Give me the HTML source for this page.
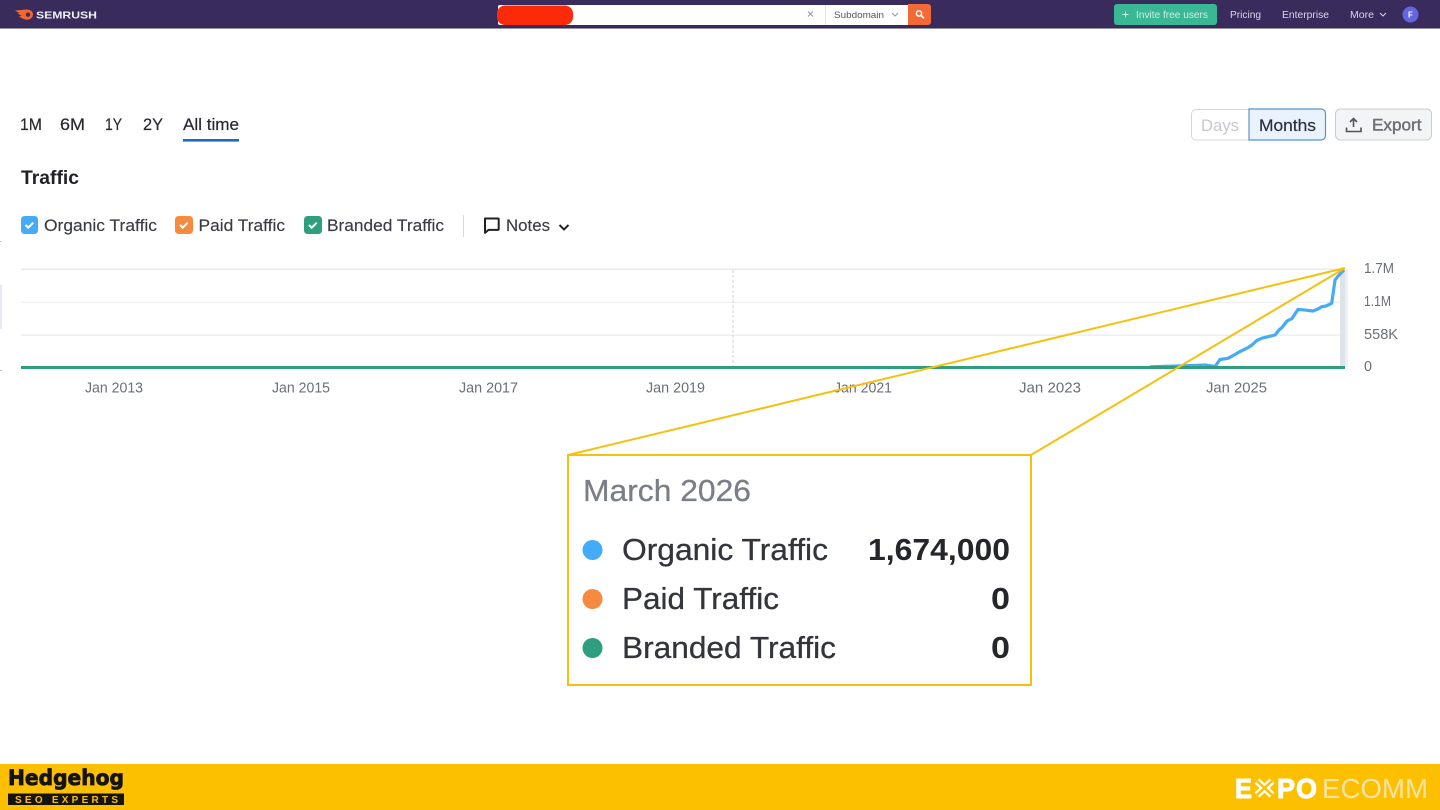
<!DOCTYPE html>
<html lang="en">
<head>
<meta charset="utf-8">
<title>Traffic</title>
<style>
html,body{margin:0;padding:0;background:#fff;width:1440px;height:810px;overflow:hidden}
svg{display:block;position:absolute;left:0;top:0;filter:blur(.35px)}
text{font-family:"Liberation Sans",sans-serif;white-space:pre}
.m{stroke:currentColor;stroke-width:.25}
</style>
</head>
<body>
<svg width="1440" height="810" viewBox="0 0 1440 810" xmlns="http://www.w3.org/2000/svg">
<rect width="1440" height="810" fill="#fff"/>

<!-- Header -->
<rect width="1440" height="28" fill="#392c5c"/>
<rect y="27.5" width="1440" height="1" fill="#2e2a40"/>
<path d="M15 10.500 L24 9.700 Q29 9 31.500 11 Q34.500 14.500 31.500 18 Q28.500 20.500 24.500 19.300 Q21 18.300 19 16 L22 15.800 Q19 14.700 17.500 13.300 L20 13 Q17 12.200 15 10.500Z" fill="#f2682f"/>
<circle cx="28" cy="14.700" r="2.200" fill="#392c5c"/>
<text x="36" y="18.300" font-size="10.500" font-weight="700" fill="#f2f0f7" textLength="61" lengthAdjust="spacingAndGlyphs">SEMRUSH</text>

<rect x="498" y="5" width="412" height="20" rx="2" fill="#fff"/>
<rect x="497" y="5.500" width="76" height="19.500" rx="8" fill="#fb2a0a"/>
<path d="M808 11.500l5 5m0-5l-5 5" stroke="#9a9ca3" stroke-width="1.100" fill="none"/>
<rect x="825" y="5" width="1" height="20" fill="#e6e7ea"/>
<text x="834" y="18" font-size="9.500" fill="#55565f" textLength="50" lengthAdjust="spacingAndGlyphs">Subdomain</text>
<path d="M892 13l3 3 3-3" stroke="#9a9ca3" stroke-width="1" fill="none"/>
<path d="M908 4h20a3 3 0 0 1 3 3v15a3 3 0 0 1-3 3h-20z" fill="#f26b37"/>
<circle cx="919" cy="13.500" r="2.600" fill="none" stroke="#fff" stroke-width="1.500"/>
<path d="M921 15.500l3 2.800" stroke="#fff" stroke-width="1.700"/>

<rect x="1114" y="4" width="103" height="21" rx="3" fill="#3ab795"/>
<path d="M1125.500 11.500v6m-3-3h6" stroke="#cdeee3" stroke-width="1" fill="none"/>
<text x="1136" y="18" font-size="10" fill="#cdeee3" textLength="72" lengthAdjust="spacingAndGlyphs">Invite free users</text>
<text x="1230" y="18" font-size="10" fill="#d9d6e4" textLength="31" lengthAdjust="spacingAndGlyphs">Pricing</text>
<text x="1282" y="18" font-size="10" fill="#d9d6e4" textLength="47" lengthAdjust="spacingAndGlyphs">Enterprise</text>
<text x="1350" y="18" font-size="10" fill="#d9d6e4" textLength="24" lengthAdjust="spacingAndGlyphs">More</text>
<path d="M1380 13l3 3 3-3" stroke="#d9d6e4" stroke-width="1" fill="none"/>
<circle cx="1410.500" cy="14.500" r="8" fill="#6366e0"/>
<text x="1410.500" y="17.500" font-size="8" font-weight="700" fill="#fff" text-anchor="middle">F</text>

<!-- Tabs -->
<g font-size="17" fill="#27292f" stroke="#27292f" stroke-width=".2">
<text x="20" y="130" textLength="22" lengthAdjust="spacingAndGlyphs">1M</text>
<text x="60" y="130" textLength="25" lengthAdjust="spacingAndGlyphs">6M</text>
<text x="105" y="130" textLength="17" lengthAdjust="spacingAndGlyphs">1Y</text>
<text x="143" y="130" textLength="20" lengthAdjust="spacingAndGlyphs">2Y</text>
<text x="183" y="130" textLength="56" lengthAdjust="spacingAndGlyphs">All time</text>
</g>
<rect x="183" y="139" width="56" height="2.600" fill="#1f69c3"/>

<text x="21" y="184" font-size="19.500" font-weight="700" fill="#1f2126" textLength="58" lengthAdjust="spacingAndGlyphs">Traffic</text>

<!-- Legend -->
<rect x="21" y="216" width="17" height="18" rx="3.500" fill="#44abf8"/>
<path d="M25.500 225l2.700 2.700 5-5" stroke="#fff" stroke-width="2" fill="none"/>
<text x="44" y="231" font-size="17" fill="#3a3c43" stroke="#3a3c43" stroke-width=".15" textLength="113" lengthAdjust="spacingAndGlyphs">Organic Traffic</text>
<rect x="175" y="216" width="18" height="18" rx="3.500" fill="#f68b3f"/>
<path d="M180 225l2.700 2.700 5-5" stroke="#fff" stroke-width="2" fill="none"/>
<text x="198.500" y="231" font-size="17" fill="#3a3c43" stroke="#3a3c43" stroke-width=".15" textLength="86.500" lengthAdjust="spacingAndGlyphs">Paid Traffic</text>
<rect x="304" y="216" width="18" height="18" rx="3.500" fill="#2f9e7f"/>
<path d="M309 225l2.700 2.700 5-5" stroke="#fff" stroke-width="2" fill="none"/>
<text x="327" y="231" font-size="17" fill="#3a3c43" stroke="#3a3c43" stroke-width=".15" textLength="117" lengthAdjust="spacingAndGlyphs">Branded Traffic</text>
<rect x="463" y="215" width="1" height="22" fill="#d6d8db"/>
<path d="M485 218.500h13a.7.7 0 0 1 .7.700v10a.7.7 0 0 1-.7.700h-9.500l-3.500 3z" fill="none" stroke="#1f2126" stroke-width="2" stroke-linejoin="round"/>
<text x="506" y="231" font-size="17" fill="#3a3c43" stroke="#3a3c43" stroke-width=".15" textLength="44" lengthAdjust="spacingAndGlyphs">Notes</text>
<path d="M559.500 225l4.500 4.500 4.500-4.500" stroke="#24262c" stroke-width="2" fill="none"/>

<!-- Buttons -->
<path d="M1249 109.500h-53a4.500 4.500 0 0 0-4.500 4.500v21.500a4.500 4.500 0 0 0 4.500 4.500h53z" fill="#fff" stroke="#d4d7da"/>
<text x="1201" y="131" font-size="17" fill="#c5c8cc" textLength="38" lengthAdjust="spacingAndGlyphs">Days</text>
<path d="M1249 109h72a4.500 4.500 0 0 1 4.500 4.500v22a4.500 4.500 0 0 1-4.500 4.500h-72z" fill="#e8f3fd" stroke="#5a92d0" stroke-width="1.200"/>
<text x="1259" y="131" font-size="17" fill="#2a2f3a" stroke="#2a2f3a" stroke-width=".2" textLength="57" lengthAdjust="spacingAndGlyphs">Months</text>
<rect x="1335.500" y="109" width="96" height="31" rx="5" fill="#f3f4f5" stroke="#c8ccd0"/>
<path d="M1353.500 127v-8.500m-3.500 3.500l3.500-3.500 3.500 3.500M1346.500 127.500v4h14.500v-4" fill="none" stroke="#4f535b" stroke-width="1.600"/>
<text x="1372" y="130.500" font-size="17" fill="#6c7077" stroke="#6c7077" stroke-width=".45" textLength="49.500" lengthAdjust="spacingAndGlyphs">Export</text>

<!-- Chart -->
<rect x="0" y="285" width="2" height="44" fill="#e8e8f0"/>
<rect x="0" y="241" width="1.500" height="1" fill="#bbb"/>
<rect x="0" y="370" width="1.500" height="1" fill="#bbb"/>
<g fill="#e9ebed">
<rect x="21" y="268.500" width="1324" height="1.600"/>
<rect x="21" y="301.800" width="1324" height="1"/>
<rect x="21" y="334.500" width="1324" height="1.300"/>
</g>
<path d="M733 270V366" stroke="#cfd2d5" stroke-dasharray="3 2" fill="none"/>
<rect x="1340" y="270" width="5" height="97" fill="#dde3e6"/>
<rect x="1345" y="270" width="3" height="97" fill="#eef1f3"/>
<path d="M1150 366.800L1193 365.500L1205 365L1215 366.500L1220 359.500L1228 358.300L1235 354.500L1240 351.500L1246.700 348.300L1252 345L1256.700 340.500L1262 338.200L1275 335L1279 330L1282 327.500L1287 321L1292 318.500L1295 314L1298 309.500L1303 309.800L1313 311L1318 309L1321.700 306.800L1326 306L1331.700 303.300L1335 280L1339 275L1344 270" fill="none" stroke="#44abf8" stroke-width="3.200" stroke-linejoin="round"/>
<rect x="21" y="366" width="1324" height="3" fill="#2f9e7f"/>

<g font-size="14.500" fill="#6b6f76">
<text x="1364" y="273" textLength="30" lengthAdjust="spacingAndGlyphs">1.7M</text>
<text x="1364" y="306" textLength="27" lengthAdjust="spacingAndGlyphs">1.1M</text>
<text x="1364" y="339" textLength="34" lengthAdjust="spacingAndGlyphs">558K</text>
<text x="1364" y="371" textLength="8" lengthAdjust="spacingAndGlyphs">0</text>
<text x="85" y="392.500" textLength="58" lengthAdjust="spacingAndGlyphs">Jan 2013</text>
<text x="272" y="392.500" textLength="58" lengthAdjust="spacingAndGlyphs">Jan 2015</text>
<text x="459" y="392.500" textLength="59" lengthAdjust="spacingAndGlyphs">Jan 2017</text>
<text x="646" y="392.500" textLength="59" lengthAdjust="spacingAndGlyphs">Jan 2019</text>
<text x="834" y="392.500" textLength="58" lengthAdjust="spacingAndGlyphs">Jan 2021</text>
<text x="1019" y="392.500" textLength="62" lengthAdjust="spacingAndGlyphs">Jan 2023</text>
<text x="1206" y="392.500" textLength="61" lengthAdjust="spacingAndGlyphs">Jan 2025</text>
</g>

<!-- Callout -->
<path d="M1345 268L568 455M1345 268L1031 455" stroke="#f5c110" stroke-width="2" fill="none"/>
<rect x="568" y="455" width="463" height="230" fill="#fff" stroke="#f5c110" stroke-width="2"/>
<text x="583" y="501" font-size="31" fill="#7a7f87" stroke="#7a7f87" stroke-width=".3" textLength="168" lengthAdjust="spacingAndGlyphs">March 2026</text>
<circle cx="592.500" cy="550" r="10" fill="#44abf8"/>
<circle cx="592.500" cy="599" r="10" fill="#f68b3f"/>
<circle cx="592.500" cy="648" r="10" fill="#2f9e7f"/>
<g font-size="31" fill="#33353b" stroke="#33353b" stroke-width=".3">
<text x="622" y="560" textLength="206" lengthAdjust="spacingAndGlyphs">Organic Traffic</text>
<text x="622" y="609" textLength="157" lengthAdjust="spacingAndGlyphs">Paid Traffic</text>
<text x="622" y="658" textLength="214" lengthAdjust="spacingAndGlyphs">Branded Traffic</text>
</g>
<g font-size="31" font-weight="700" fill="#24262c">
<text x="868" y="560" textLength="142" lengthAdjust="spacingAndGlyphs">1,674,000</text>
<text x="991" y="609" textLength="19" lengthAdjust="spacingAndGlyphs">0</text>
<text x="991" y="658" textLength="19" lengthAdjust="spacingAndGlyphs">0</text>
</g>

<!-- Footer -->
<rect y="764" width="1440" height="46" fill="#fdc000"/>
<text x="8" y="785" font-size="21" font-weight="700" fill="#141414" stroke="#141414" stroke-width=".8" style="font-family:'DejaVu Sans',sans-serif" textLength="116" lengthAdjust="spacingAndGlyphs">Hedgehog</text>
<rect x="8" y="793.500" width="116" height="11.500" fill="#141414"/>
<text x="15" y="803" font-size="10" font-weight="700" fill="#fdc000" textLength="103" lengthAdjust="spacing">SEO EXPERTS</text>

<text x="1235" y="798" font-size="28" font-weight="700" fill="#fff" stroke="#fff" stroke-width="1" textLength="17" lengthAdjust="spacingAndGlyphs">E</text>
<path d="M1257 781l15 14m0-14l-15 14" stroke="#fff" stroke-width="7" fill="none"/>
<path d="M1257 781l15 14m0-14l-15 14" stroke="#fdc000" stroke-width="2.500" fill="none"/>
<text x="1277" y="798" font-size="28" font-weight="700" fill="#fff" stroke="#fff" stroke-width="1" textLength="18" lengthAdjust="spacingAndGlyphs">P</text>
<text x="1296" y="798" font-size="28" font-weight="700" fill="#fff" stroke="#fff" stroke-width="1" textLength="21" lengthAdjust="spacingAndGlyphs">O</text>
<text x="1322" y="798" font-size="28" fill="#f6e3a6" textLength="106" lengthAdjust="spacingAndGlyphs">ECOMM</text>
</svg>
</body>
</html>
